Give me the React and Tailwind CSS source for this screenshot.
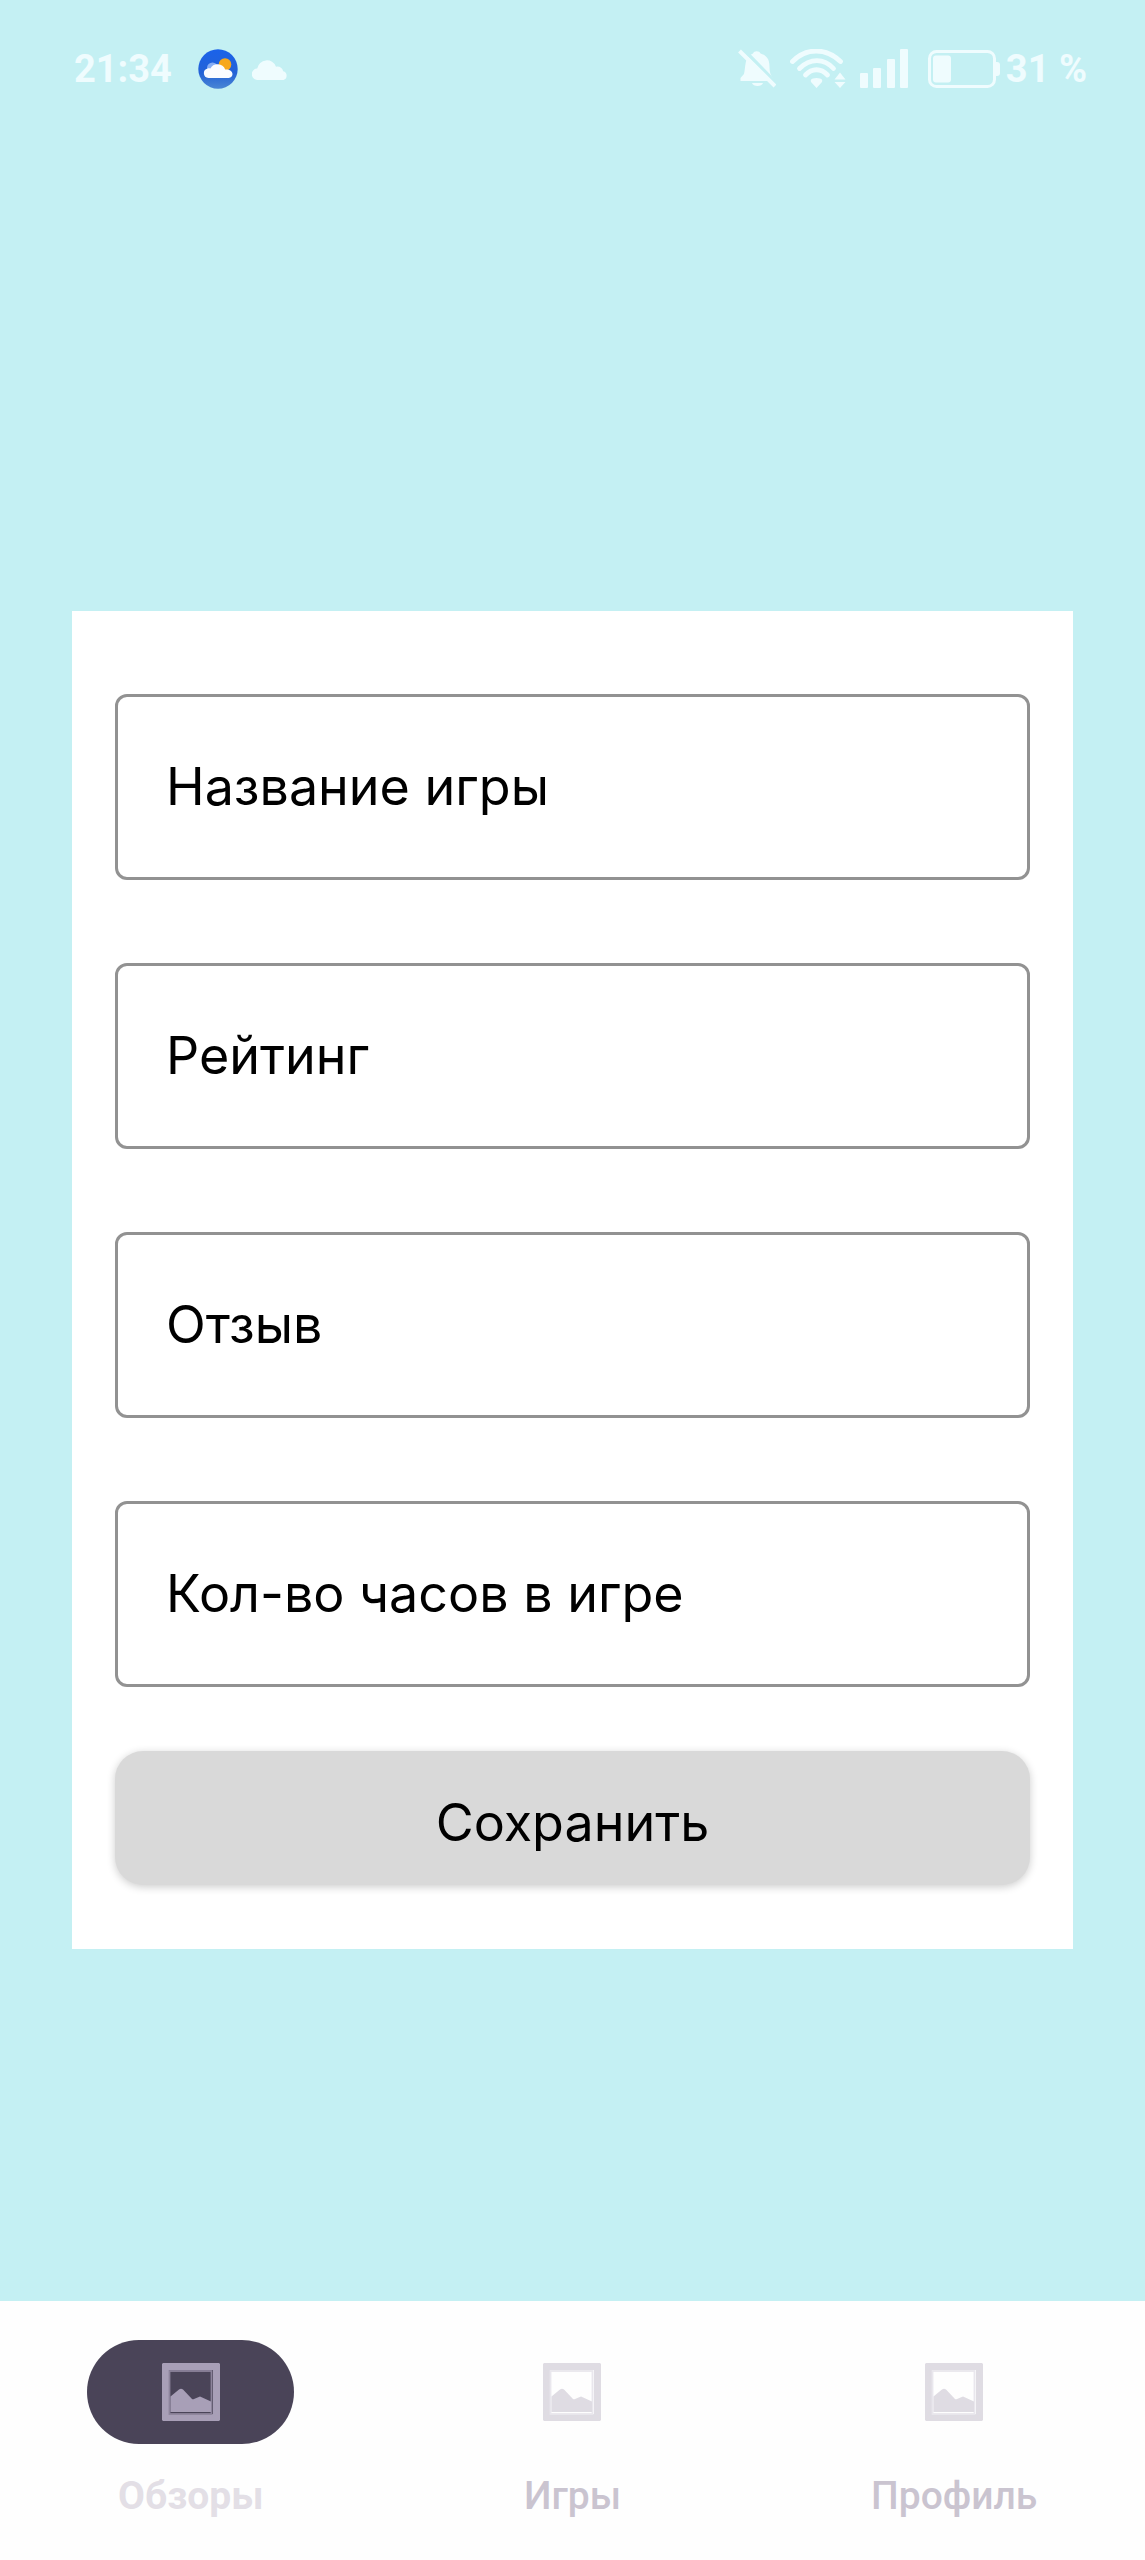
const fields = [
  { id: "title", label: "Название игры" },
  { id: "rating", label: "Рейтинг" },
  { id: "review", label: "Отзыв" },
  { id: "hours", label: "Кол-во часов в игре" },
];

const tabs = [
  { label: "Обзоры", active: true },
  { label: "Игры", active: false },
  { label: "Профиль", active: false },
];

function WeatherIcon() {
  return (
    <svg className="size-10" viewBox="0 0 40 40" aria-hidden="true">
      <defs>
        <linearGradient id="sky" x1="0" y1="0" x2="0" y2="1">
          <stop offset="0" stopColor="#1a62ea" />
          <stop offset="0.6" stopColor="#2462d6" />
          <stop offset="1" stopColor="#4a86d4" />
        </linearGradient>
      </defs>
      <circle cx="20" cy="20" r="19.7" fill="url(#sky)" />
      <circle cx="14.5" cy="19" r="5.5" fill="#86adf5" />
      <circle cx="27" cy="15.5" r="6.3" fill="#f7a81c" />
      <path d="M10.500 29a4.800 4.800 0 0 1-.8-9.500c1-.3 1.800-.2 2.600.1a8.200 8.200 0 0 1 14.900.9c4 -.4 7.300 1.500 7.300 4.600 0 2.300-1.500 3.900-3.800 3.900z" fill="#fbfcff" />
    </svg>
  );
}

function CloudIcon() {
  return (
    <svg className="h-[21px] w-9" viewBox="0 0 36 21" fill="currentColor" aria-hidden="true">
      <path d="M6 21a5.800 5.800 0 0 1-.8-11.600A9.800 9.800 0 0 1 24 7.700a6.600 6.600 0 0 1 7.200 4.500A4.600 4.600 0 0 1 31.500 21z" />
    </svg>
  );
}

function BellOffIcon() {
  return (
    <svg className="h-10 w-[38px]" viewBox="0 0 38 40" aria-hidden="true">
      <path d="M2.500 32v-3l3.500-4c2-8 0-17 9-20.500C16 1.500 21.500 1.500 22.500 4.500c8 2.500 9 8 9 13.500 0 5 1 8 3 10.500L36.500 32zM14 34h11c-1 4-10 4-11 0z" fill="currentColor" />
      <path d="M5 0 38 34" stroke="#c4f0f3" strokeWidth="3.500" />
      <path d="M1.500 2 37 37" stroke="currentColor" strokeWidth="4" />
    </svg>
  );
}

function WifiIcon() {
  return (
    <svg className="h-10 w-14" viewBox="0 0 56 40" aria-hidden="true">
      <g fill="none" stroke="currentColor" strokeWidth="4.800" strokeLinecap="round">
        <path d="M2.500 12.500C16-1.500 36-1.500 50.500 12.500" />
        <path d="M9.500 19.500c10.500-10.500 24.500-10.500 34 0" />
        <path d="M15.500 26c6.500-7 15.500-7 22 0" />
      </g>
      <path d="M21 33q-1-3 2-3.500 3.500-1.200 7 0 3 .5 2 3.500l-5.500 6zM44.500 30.500l5.500-7 5.500 7zM44.500 33h11L50 39z" fill="currentColor" />
    </svg>
  );
}

function SignalIcon() {
  return (
    <svg className="h-10 w-12" viewBox="0 0 48 40" fill="currentColor" aria-hidden="true">
      <rect x="0" y="24" width="8" height="15" rx="1" />
      <rect x="13" y="19" width="8" height="20" rx="1" />
      <rect x="27" y="10" width="8" height="29" rx="1" />
      <rect x="40" y="0" width="8" height="39" rx="1" />
    </svg>
  );
}

function BatteryIcon() {
  return (
    <svg className="h-[38px] w-[72px]" viewBox="0 0 72 38" aria-hidden="true">
      <rect x="1.500" y="1.500" width="65" height="35" rx="7" fill="none" stroke="currentColor" strokeWidth="3" />
      <rect x="5" y="5.500" width="18" height="27" rx="3" fill="currentColor" />
      <path d="M67 12h2q3 0 3 3v8q0 3-3 3h-2z" fill="currentColor" />
    </svg>
  );
}

function PictureIcon({ active }) {
  const body = active ? "#a89fb7" : "#dfdce3";
  const line = active ? "#8d849c" : "#e9e7ed";
  return (
    <svg className="size-[58px]" viewBox="0 0 58 58" aria-hidden="true">
      <path fillRule="evenodd" fill={body} d="M1 0h56l1 1v56l-1 1H1l-1-1V1zM7 7v44h44V7z" />
      <rect x="7.500" y="8" width="42" height="43" fill="none" stroke={line} strokeWidth="1.800" />
      <path d="M8.500 33.500 17 26.500q2-1.500 4 0L30 36q1 .6 2 0l6-2.500 11 5V49H8.500z" fill={body} />
    </svg>
  );
}

// Outlined text box whose label rests inside it until the box is focused or filled.
function TextField({ id, label }) {
  return (
    <div className="relative flex">
      <input
        id={id}
        type="text"
        placeholder=" "
        className="peer h-[186px] w-full rounded-xl border-[3px] border-[#929292] px-12 text-[52px]"
      />
      <label
        htmlFor={id}
        className="pointer-events-none absolute inset-y-0 left-[51px] flex items-center text-[52px] peer-focus:hidden peer-[:not(:placeholder-shown)]:hidden"
      >
        {label}
      </label>
    </div>
  );
}

export default function App() {
  return (
    <div className="flex min-h-screen flex-col bg-[#c4f0f3] font-['Inter',sans-serif] text-black">
      <header className="flex h-[138px] items-center justify-between pr-[58px] pl-[74px] font-['Roboto',sans-serif] text-[38px] leading-10 font-bold text-[#effcfe]">
        <div className="flex items-center gap-[26px]">
          <time>21:34</time>
          <div className="flex items-center gap-3.5">
            <WeatherIcon />
            <CloudIcon />
          </div>
        </div>
        <div className="flex items-center gap-5">
          <div className="flex items-center gap-3.5">
            <BellOffIcon />
            <WifiIcon />
            <SignalIcon />
          </div>
          <div className="flex items-center gap-1.5">
            <BatteryIcon />
            <span>31 %</span>
          </div>
        </div>
      </header>

      <main className="flex flex-1 items-center px-[72px] pt-[121px]">
        <form
          className="flex w-full flex-col gap-16 bg-white px-[43px] pt-[83px] pb-16"
          onSubmit={(event) => event.preventDefault()}
        >
          <div className="flex flex-col gap-[83px]">
            {fields.map((field) => (
              <TextField key={field.id} id={field.id} label={field.label} />
            ))}
          </div>
          <button
            type="submit"
            className="h-[134px] rounded-[28px] bg-[#d9d9d9] pt-2.5 text-[52px] shadow-[0_2px_8px_rgba(0,0,0,0.2)]"
          >
            Сохранить
          </button>
        </form>
      </main>

      <nav className="grid h-[259px] grid-cols-3 bg-[#fefefe] pt-[39px] font-['Roboto',sans-serif] text-[39px] leading-[52px]">
        {tabs.map((tab) => (
          <a
            key={tab.label}
            href="#"
            aria-current={tab.active ? "page" : undefined}
            className={
              tab.active
                ? "flex flex-col items-center gap-[26px] font-bold text-[#e3dfe6]"
                : "flex flex-col items-center gap-[26px] font-medium text-[#cac4d0]"
            }
          >
            <span
              className={
                tab.active
                  ? "flex h-[104px] w-[207px] items-center justify-center rounded-full bg-[#4a4458]"
                  : "flex h-[104px] w-[207px] items-center justify-center"
              }
            >
              <PictureIcon active={tab.active} />
            </span>
            {tab.label}
          </a>
        ))}
      </nav>
    </div>
  );
}
